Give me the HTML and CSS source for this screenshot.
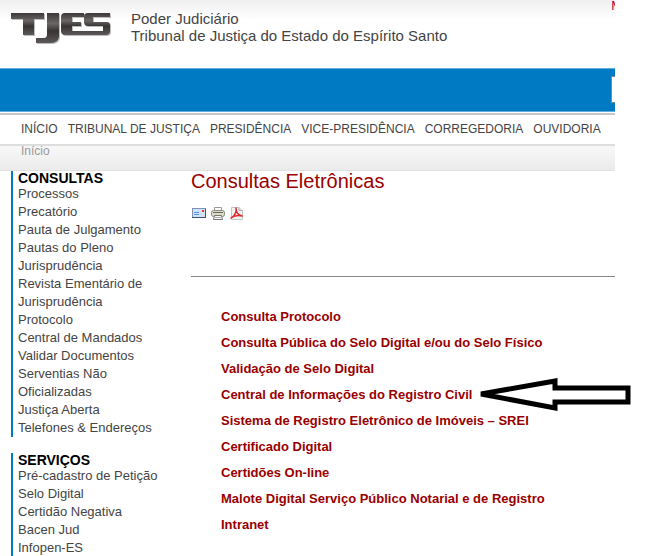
FILE: index.html
```
<!DOCTYPE html>
<html lang="pt-BR">
  <head>
    <meta charset="UTF-8" />
    <meta name="viewport" content="width=device-width, initial-scale=1.0" />
    <title>TJES - Consultas Eletrônicas</title>
    <link rel="stylesheet" href="styles.css">
  </head>
  <body>
    <div class="site">
      <header class="header">
        <svg class="logo" width="104" height="36" viewBox="0 0 104 36" role="img" aria-label="TJES">
          <defs>
            <linearGradient id="metal" x1="0" y1="0" x2="0" y2="1">
              <stop offset="0" stop-color="#3c3838" />
              <stop offset="0.35" stop-color="#6a6666" />
              <stop offset="0.6" stop-color="#383434" />
              <stop offset="1" stop-color="#5c5858" />
            </linearGradient>
            <g id="mark">
              <path d="M1 3H34V9H24V25H13V9H1Z" />
              <path d="M37 3H49V27Q48 33 40 33H26V28H34Q37 28 37 24Z" />
              <path d="M55 3H74V7H62V12H71V16H62V21H75V25H55Q51 25 51 21V7Q51 3 55 3Z" />
              <path d="M78 3H100V7H83V12H97Q100 12 100 15V21Q100 25 96 25H75V21H93V16H78Q74 16 74 12V7Q74 3 78 3Z" />
            </g>
          </defs>
          <use href="#mark" x="1" y="1" fill="#bcbcbc" />
          <use href="#mark" fill="url(#metal)" />
        </svg>
        <p class="court">Poder Judiciário<br>Tribunal de Justiça do Estado do Espírito Santo</p>
        <a href="#" class="map-link">M</a>
      </header>

      <form class="search-bar">
        <input type="text" class="search" aria-label="Pesquisar" />
      </form>

      <nav class="menu">
        <a href="#">INÍCIO</a>
        <a href="#">TRIBUNAL DE JUSTIÇA</a>
        <a href="#">PRESIDÊNCIA</a>
        <a href="#">VICE-PRESIDÊNCIA</a>
        <a href="#">CORREGEDORIA</a>
        <a href="#">OUVIDORIA</a>
      </nav>

      <div class="breadcrumb">Início</div>

      <div class="columns">
        <aside class="sidebar">
          <section class="module">
            <h3>CONSULTAS</h3>
            <ul>
              <li><a href="#">Processos</a></li>
              <li><a href="#">Precatório</a></li>
              <li><a href="#">Pauta de Julgamento</a></li>
              <li><a href="#">Pautas do Pleno</a></li>
              <li><a href="#">Jurisprudência</a></li>
              <li><a href="#">Revista Ementário de<br>Jurisprudência</a></li>
              <li><a href="#">Protocolo</a></li>
              <li><a href="#">Central de Mandados</a></li>
              <li><a href="#">Validar Documentos</a></li>
              <li><a href="#">Serventias Não<br>Oficializadas</a></li>
              <li><a href="#">Justiça Aberta</a></li>
              <li><a href="#">Telefones &amp; Endereços</a></li>
            </ul>
          </section>
          <section class="module">
            <h3>SERVIÇOS</h3>
            <ul>
              <li><a href="#">Pré-cadastro de Petição</a></li>
              <li><a href="#">Selo Digital</a></li>
              <li><a href="#">Certidão Negativa</a></li>
              <li><a href="#">Bacen Jud</a></li>
              <li><a href="#">Infopen-ES</a></li>
            </ul>
          </section>
        </aside>

        <main class="content">
          <h1>Consultas Eletrônicas</h1>
          <div class="tools">
            <a href="#" aria-label="E-mail">
              <svg width="16" height="16" viewBox="0 0 16 16">
                <rect x="1.5" y="3.5" width="13" height="9" fill="#cfe3fa" stroke="#7d93b5" />
                <path d="M1 12.5H15M14.5 4V13" stroke="#3f5270" />
                <path d="M3 7.5H8M3 9.5H8" stroke="#5a93dc" />
                <rect x="11" y="5" width="2" height="2" fill="#e8392c" />
              </svg>
            </a>
            <a href="#" aria-label="Imprimir">
              <svg width="16" height="16" viewBox="0 0 16 16">
                <path d="M4.5 6V2.5H11.500V6" fill="#fff" stroke="#999" />
                <rect x="1.5" y="5.5" width="13" height="6" rx="2" fill="#dedbc4" stroke="#8c8b7c" />
                <path d="M3 7.5H13" stroke="#666" />
                <path d="M4.5 10.5H11.5L12.5 14.5H3.5Z" fill="#fafafa" stroke="#777" />
                <path d="M5 12.5H11" stroke="#aaa" />
              </svg>
            </a>
            <a href="#" aria-label="PDF">
              <svg width="16" height="16" viewBox="0 0 16 16">
                <path d="M2.5 2.5H10L13.5 6V14.5H2.5Z" fill="#f3f3f3" stroke="#c4c4c4" />
                <path d="M10 2.5V5.5H13.5" fill="none" stroke="#aaa" />
                <path d="M2 13C5 12 8 7 7 3C7 7 9 10 13 11C9 10 5 11 2 13Z" fill="none" stroke="#e0252a" stroke-width="1.5" stroke-linejoin="round" />
              </svg>
            </a>
          </div>
          <hr>
          <ul class="links">
            <li><a href="#">Consulta Protocolo</a></li>
            <li><a href="#">Consulta Pública do Selo Digital e/ou do Selo Físico</a></li>
            <li><a href="#">Validação de Selo Digital</a></li>
            <li class="marked">
              <a href="#">Central de Informações do Registro Civil</a>
              <svg class="arrow" width="156" height="38" viewBox="0 0 156 38" aria-hidden="true">
                <path d="M5 18L79 5V12H152V26H79V32Z" fill="#fff" stroke="#000" stroke-width="5" />
              </svg>
            </li>
            <li><a href="#">Sistema de Registro Eletrônico de Imóveis – SREI</a></li>
            <li><a href="#">Certificado Digital</a></li>
            <li><a href="#">Certidões On-line</a></li>
            <li><a href="#">Malote Digital Serviço Público Notarial e de Registro</a></li>
            <li><a href="#">Intranet</a></li>
          </ul>
        </main>
      </div>
    </div>
  </body>
</html>
```
FILE: styles.css
```
:root {
  --blue: #007ac3;
  --red: #990000;
  --text: #444;
}

* {
  margin: 0;
  padding: 0;
  box-sizing: border-box;
}

body {
  background: #fff;
  color: var(--text);
  font-family: "Liberation Sans", Arial, sans-serif;
  font-size: 13px;
}

a {
  color: inherit;
  text-decoration: none;
}

ul {
  list-style: none;
}

.site {
  margin-right: 34px;
}

.header {
  display: flex;
  align-items: flex-start;
  gap: 17px;
  height: 68px;
  padding: 10px 0 0 10px;
  background: linear-gradient(#efefef, #fff 20px);
  overflow: hidden;
}

.logo {
  flex: none;
}

.court {
  font-size: 15px;
  line-height: 17px;
  white-space: nowrap;
}

.map-link {
  margin: -12px -7px 0 auto;
  color: #b8003c;
}

.search-bar {
  display: flex;
  justify-content: flex-end;
  padding: 7px 0 8px;
  background: var(--blue);
  border-top: 1px solid #5fb0dd;
  border-bottom: 1px solid #5fb0dd;
  overflow: hidden;
}

.search {
  flex: none;
  width: 150px;
  height: 27px;
  margin-right: -146px;
  background: #fff;
  border: 1px solid #888;
}

.menu {
  display: flex;
  gap: 10px;
  margin-top: 1px;
  padding: 5px 0 6px 21px;
  border-top: 2px solid #c8c8c8;
  border-bottom: 2px solid #ddd;
  font-size: 12px;
  line-height: 18px;
  white-space: nowrap;
}

.breadcrumb {
  height: 25px;
  padding-left: 21px;
  background: linear-gradient(#f8f8f8, #ebebeb);
  border-bottom: 1px solid #e2e2e2;
  color: #999;
  font-size: 12px;
  line-height: 10px;
}

.columns {
  display: flex;
  align-items: flex-start;
  gap: 20px;
}

.sidebar {
  flex: none;
  display: flex;
  flex-direction: column;
  gap: 16px;
  width: 171px;
  padding-left: 11px;
}

.module {
  padding-left: 5px;
  border-left: 2px solid var(--blue);
  line-height: 18px;
}

.module h3 {
  color: #000;
  font-size: 14px;
  line-height: 14px;
}

.content {
  flex: 1;
  min-width: 0;
}

.content h1 {
  color: var(--red);
  font-size: 20px;
  font-weight: normal;
  line-height: 20px;
}

.tools {
  display: flex;
  gap: 3px;
  margin-top: 14px;
}

.tools svg {
  display: block;
}

hr {
  margin: 55px 0 27px;
  border: 0;
  border-top: 1px solid #888;
}

.links {
  padding-left: 30px;
  color: var(--red);
  font-weight: bold;
  line-height: 26px;
  white-space: nowrap;
}

.marked {
  position: relative;
  width: max-content;
}

.arrow {
  position: absolute;
  top: -6px;
  left: calc(100% + 4px);
}
```
